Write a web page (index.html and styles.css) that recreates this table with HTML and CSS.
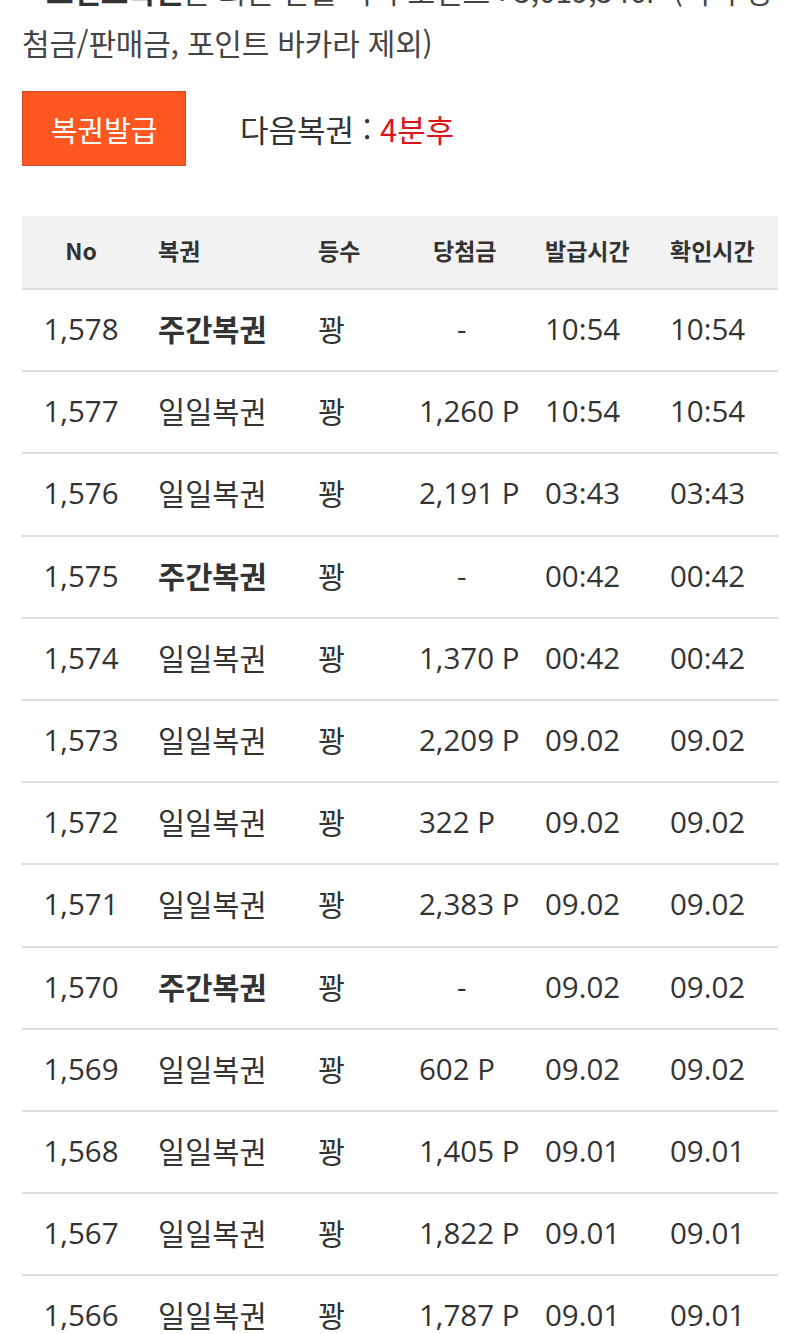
FILE: index.html
```html
<!DOCTYPE html>
<html lang="ko">
<head>
<meta charset="utf-8">
<link rel="stylesheet" href="styles.css">
</head>
<body>
<main class="page">
  <p class="notice"><span class="mark">·</span><strong>포인트복권</strong>은 회원 전월 획득 포인트 : 5,019,546P (획득 당첨금/판매금, 포인트 바카라 제외)</p>
  <div class="issue">
    <button class="issue-btn" type="button">복권발급</button>
    <div class="next">다음복권 : <span class="next-time">4분후</span></div>
  </div>
  <table class="lotto">
    <colgroup>
      <col class="c-no"><col class="c-type"><col class="c-rank"><col class="c-prize"><col class="c-issue"><col class="c-check">
    </colgroup>
    <thead>
      <tr><th class="no">No</th><th>복권</th><th>등수</th><th class="prize-h">당첨금</th><th>발급시간</th><th>확인시간</th></tr>
    </thead>
    <tbody>
      <tr><td class="no">1,578</td><td class="weekly">주간복권</td><td>꽝</td><td><span class="dash">-</span></td><td>10:54</td><td>10:54</td></tr>
      <tr><td class="no">1,577</td><td>일일복권</td><td>꽝</td><td>1,260 P</td><td>10:54</td><td>10:54</td></tr>
      <tr><td class="no">1,576</td><td>일일복권</td><td>꽝</td><td>2,191 P</td><td>03:43</td><td>03:43</td></tr>
      <tr><td class="no">1,575</td><td class="weekly">주간복권</td><td>꽝</td><td><span class="dash">-</span></td><td>00:42</td><td>00:42</td></tr>
      <tr><td class="no">1,574</td><td>일일복권</td><td>꽝</td><td>1,370 P</td><td>00:42</td><td>00:42</td></tr>
      <tr><td class="no">1,573</td><td>일일복권</td><td>꽝</td><td>2,209 P</td><td>09.02</td><td>09.02</td></tr>
      <tr><td class="no">1,572</td><td>일일복권</td><td>꽝</td><td>322 P</td><td>09.02</td><td>09.02</td></tr>
      <tr><td class="no">1,571</td><td>일일복권</td><td>꽝</td><td>2,383 P</td><td>09.02</td><td>09.02</td></tr>
      <tr><td class="no">1,570</td><td class="weekly">주간복권</td><td>꽝</td><td><span class="dash">-</span></td><td>09.02</td><td>09.02</td></tr>
      <tr><td class="no">1,569</td><td>일일복권</td><td>꽝</td><td>602 P</td><td>09.02</td><td>09.02</td></tr>
      <tr><td class="no">1,568</td><td>일일복권</td><td>꽝</td><td>1,405 P</td><td>09.01</td><td>09.01</td></tr>
      <tr><td class="no">1,567</td><td>일일복권</td><td>꽝</td><td>1,822 P</td><td>09.01</td><td>09.01</td></tr>
      <tr><td class="no">1,566</td><td>일일복권</td><td>꽝</td><td>1,787 P</td><td>09.01</td><td>09.01</td></tr>
    </tbody>
  </table>
</main>
</body>
</html>
```

FILE: styles.css
```css
* { box-sizing: border-box; }
html, body { margin: 0; padding: 0; background: #fff; }
body {
  font-family: "Open Sans", "Noto Sans CJK KR", sans-serif;
  color: #333;
  overflow: hidden;
}
.page {
  padding: 0 22px;
  margin-top: -36px;
}
.notice {
  margin: 0;
  font-family: "Noto Sans CJK KR", "Noto Sans", sans-serif;
  font-size: 30px;
  line-height: 52px;
  letter-spacing: -0.2px;
  color: #444;
}
.notice .mark { display: inline-block; width: 24px; overflow: hidden; vertical-align: top; }
.notice strong { font-weight: 700; color: #333; }
.issue {
  display: flex;
  align-items: center;
  gap: 54px;
  margin-top: 23px;
}
.issue-btn {
  width: 164px;
  height: 75px;
  background: #ff5722;
  border: 1px solid #cf4b26;
  color: #fff;
  font-family: "Noto Sans CJK KR", sans-serif;
  font-size: 29px;
  padding: 0;
}
.next {
  font-family: "Noto Sans CJK KR", "Noto Sans", sans-serif;
  font-size: 31px;
  color: #333;
}
.next-time { color: #d9141b; }
.lotto {
  width: 100%;
  margin-top: 50px;
  border-collapse: collapse;
  table-layout: fixed;
}
.c-no { width: 118px; }
.c-type { width: 160px; }
.c-rank { width: 101px; }
.c-prize { width: 126px; }
.c-issue { width: 125px; }
.c-check { width: 126px; }
.lotto th {
  background: #f2f2f2;
  height: 73px;
  font-family: "Noto Sans CJK KR", sans-serif;
  font-size: 23px;
  font-weight: 700;
  color: #333;
  text-align: left;
  padding: 0 0 4px 18px;
  border-bottom: 2px solid #ddd;
}
.lotto th.prize-h { padding-left: 32px; }
.lotto td {
  height: 82.2px;
  font-size: 29.5px;
  color: #333;
  text-align: left;
  padding: 0 0 3px 18px;
  border-bottom: 2px solid #ddd;
  white-space: nowrap;
}
.lotto .no { text-align: center; padding-left: 0; }
.lotto td.weekly { font-weight: 700; }
.dash { padding-left: 38px; }
```
